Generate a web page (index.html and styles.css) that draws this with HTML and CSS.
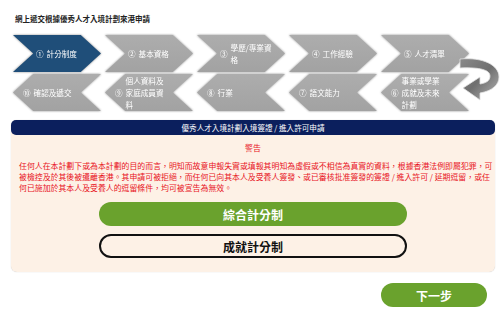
FILE: index.html
```html
<!DOCTYPE html>
<html lang="zh-Hant">

<head>
    <meta charset="UTF-8">
    <meta name="viewport" content="width=device-width, initial-scale=1.0">
    <title>優秀人才入境計劃</title>
    <link rel="stylesheet" href="styles.css">
</head>

<body>
    <h1 class="page-title">網上遞交根據優秀人才入境計劃來港申請</h1>

    <div class="steps">
        <div class="step-row">
            <div class="step"><div class="step-shape active"><span class="num">①</span><span class="label">計分制度</span></div></div>
            <div class="step"><div class="step-shape"><span class="num">②</span><span class="label">基本資格</span></div></div>
            <div class="step"><div class="step-shape"><span class="num">③</span><span class="label">學歷/專業資格</span></div></div>
            <div class="step"><div class="step-shape"><span class="num">④</span><span class="label">工作經驗</span></div></div>
            <div class="step"><div class="step-shape"><span class="num">⑤</span><span class="label">人才清單</span></div></div>
        </div>
        <div class="step-row back">
            <div class="step"><div class="step-shape"><span class="num">⑩</span><span class="label">確認及遞交</span></div></div>
            <div class="step"><div class="step-shape"><span class="num">⑨</span><span class="label">個人資料及家庭成員資料</span></div></div>
            <div class="step"><div class="step-shape"><span class="num">⑧</span><span class="label">行業</span></div></div>
            <div class="step"><div class="step-shape"><span class="num">⑦</span><span class="label">語文能力</span></div></div>
            <div class="step"><div class="step-shape"><span class="num">⑥</span><span class="label">事業或學業成就及未來計劃</span></div></div>
        </div>

        <!-- turn arrow from step 5 down to step 6 -->
        <svg class="turn-arrow" width="45" height="50" viewBox="0 0 45 50">
            <defs>
                <linearGradient id="turn" x1="0" y1="0" x2="1" y2="1">
                    <stop offset="0" stop-color="#8a8a8a" />
                    <stop offset="0.5" stop-color="#6f6f6f" />
                    <stop offset="1" stop-color="#b5b5b5" />
                </linearGradient>
            </defs>
            <path d="M5,4 C28,2 44,10 44,22 C44,30 37,36 25,38 L25,45 L8,33 L25,22 L25,29 C31,28 35,26 35,21 C35,15 25,12 5,13 Z"
                fill="url(#turn)" stroke="#e2e2e2" stroke-width="0.8" />
        </svg>
    </div>

    <section class="panel">
        <div class="panel-head">優秀人才入境計劃入境簽證 / 進入許可申請</div>
        <div class="panel-body">
            <p class="warn-title">警告</p>
            <p class="warn-text">任何人在本計劃下或為本計劃的目的而言，明知而故意申報失實或填報其明知為虛假或不相信為真實的資料，根據香港法例即屬犯罪，可<br>被檢控及於其後被遣離香港。其申請可被拒絕，而任何已向其本人及受養人簽發、或已審核批准簽發的簽證 / 進入許可 / 延期逗留，或任<br>何已施加於其本人及受養人的逗留條件，均可被宣告為無效。</p>

            <button type="button" class="choice primary">綜合計分制</button>
            <button type="button" class="choice outline">成就計分制</button>
        </div>
    </section>

    <div class="actions">
        <button type="button" class="next-btn">下一步</button>
    </div>
</body>

</html>
```

FILE: styles.css
```css
/* Reset */
* {
    margin: 0;
    padding: 0;
    box-sizing: border-box;
}

body {
    font-family: "Noto Sans CJK TC", "Noto Sans", sans-serif;
    color: #333;
    background-color: #fff;
    width: 500px;
}

.page-title {
    font-size: 7.5px;
    line-height: 10px;
    font-weight: bold;
    color: #222;
    padding: 14px 0 0 15px;
}

/* Steps */
.steps {
    position: relative;
    margin: 11px 0 0 13px;
}

.step-row {
    display: flex;
    gap: 4px;
}

.step-row.back {
    margin-top: 2px;
}

.step {
    width: 88px;
    height: 37px;
    filter: drop-shadow(0 0 1px rgba(0, 0, 0, 0.45));
}

.step-shape {
    width: 100%;
    height: 100%;
    display: flex;
    align-items: center;
    gap: 3px;
    padding-left: 23px;
    background: linear-gradient(#adadad, #a2a2a2);
    color: white;
    font-size: 7.6px;
    line-height: 12px;
    clip-path: polygon(0 0, 77% 0, 100% 50%, 77% 100%, 0 100%, 23% 50%);
}

.step-row.back .step-shape {
    padding-left: 10px;
    clip-path: polygon(23% 0, 100% 0, 77% 50%, 100% 100%, 23% 100%, 0 50%);
}

.step-shape.active {
    background: #1f4e79;
}

.step-shape .num {
    flex: none;
}

.step-shape .label {
    width: 44px;
}

.turn-arrow {
    position: absolute;
    left: 442px;
    top: 20px;
}

/* Panel */
.panel {
    margin: 9px 5px 0 11px;
    background: #fdf1e6;
    border-radius: 6px;
    box-shadow: 0 0 1px rgba(0, 0, 0, 0.25);
}

.panel-head {
    height: 15px;
    line-height: 15px;
    background: #0b1f5d;
    color: white;
    text-align: center;
    font-size: 7.6px;
    border-radius: 5px;
}

.panel-body {
    padding: 7px 8px 14px;
}

.warn-title,
.warn-text {
    color: #e8121c;
    font-size: 7.9px;
    line-height: 11px;
}

.warn-title {
    text-align: center;
}

.warn-text {
    margin-top: 7px;
    white-space: nowrap;
}

.choice {
    display: block;
    width: 308px;
    height: 24px;
    margin: 0 auto;
    border-radius: 12px;
    font-family: inherit;
    font-size: 12px;
    font-weight: bold;
    cursor: pointer;
}

.choice.primary {
    margin-top: 9px;
    border: none;
    background: #6aa22d;
    color: white;
}

.choice.outline {
    margin-top: 8px;
    border: 2px solid #111;
    background: transparent;
    color: #111;
}

.actions {
    display: flex;
    justify-content: flex-end;
    padding-right: 13px;
    margin-top: 11px;
}

.next-btn {
    width: 106px;
    height: 24px;
    border: none;
    border-radius: 12px;
    background: #6aa22d;
    color: white;
    font-family: inherit;
    font-size: 12px;
    font-weight: bold;
    cursor: pointer;
}
```
